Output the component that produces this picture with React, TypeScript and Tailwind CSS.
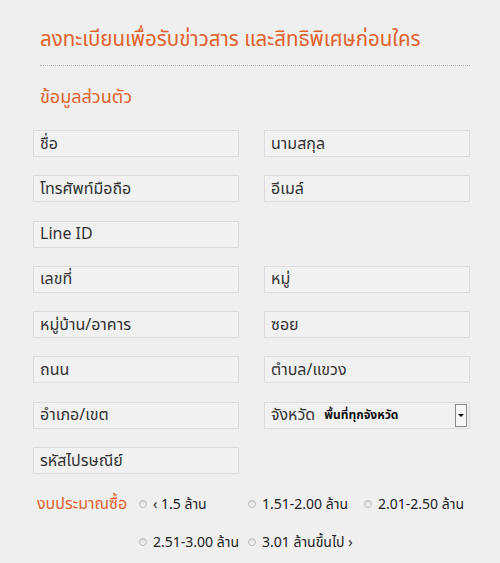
const fields: [string, string | null][] = [
  ['ชื่อ', 'นามสกุล'],
  ['โทรศัพท์มือถือ', 'อีเมล์'],
  ['Line ID', null],
  ['เลขที่', 'หมู่'],
  ['หมู่บ้าน/อาคาร', 'ซอย'],
  ['ถนน', 'ตำบล/แขวง'],
  ['อำเภอ/เขต', 'PROVINCE'],
  ['รหัสไปรษณีย์', null],
];

function Field({ label }: { label: string }) {
  return (
    <div className="h-[27px] border border-[#dcdcdc] bg-[#f1f1f1] pl-[6px] flex items-center text-[16px] text-[#333]">
      {label}
    </div>
  );
}

function Province() {
  return (
    <div className="h-[27px] border border-[#dcdcdc] bg-[#f1f1f1] pl-[6px] pr-[2px] flex items-center text-[#333]">
      <span className="text-[16px]">จังหวัด</span>
      <span className="ml-[9px] text-[12px] font-bold text-[#111]">พื้นที่ทุกจังหวัด</span>
      <span className="ml-auto w-[12px] h-[23px] border border-[#888] bg-[#f7f7f7] flex items-center justify-center">
        <span className="block w-0 h-0 border-l-[3px] border-r-[3px] border-t-[3px] border-l-transparent border-r-transparent border-t-black" />
      </span>
    </div>
  );
}

function Radio({ label, w }: { label: string; w: string }) {
  return (
    <div className={`flex items-center ${w}`}>
      <span className="w-[8px] h-[8px] rounded-full border border-[#bbb] bg-gradient-to-b from-[#ddd] to-[#f5f5f5] mr-[6px]" />
      <span className="text-[14px] text-[#222] whitespace-nowrap">{label}</span>
    </div>
  );
}

export default function App() {
  return (
    <div
      className="w-[500px] h-[563px] bg-[#efefef] overflow-hidden"
      style={{ fontFamily: '"Noto Sans Thai", "Noto Sans", "DejaVu Sans", sans-serif' }}
    >
      <div className="pl-[33px] pr-[30px]">
        <h1 className="pt-[26px] pl-[7px] text-[20.5px] leading-[28px] text-[#e0622a] font-normal">
          ลงทะเบียนเพื่อรับข่าวสาร และสิทธิพิเศษก่อนใคร
        </h1>
        <div className="mt-[11px] ml-[7px] border-t border-dotted border-[#b5b5b5]" />
        <h2 className="mt-[20px] pl-[7px] text-[18px] leading-[24px] text-[#e0622a]">ข้อมูลส่วนตัว</h2>

        <div className="mt-[20px] grid grid-cols-[206px_206px] gap-x-[25px] gap-y-[18.3px]">
          {fields.map(([l, r]) => (
            <>
              <Field key={l} label={l} />
              {r === 'PROVINCE' ? <Province key="p" /> : r ? <Field key={r} label={r} /> : <div key={l + 'x'} />}
            </>
          ))}
        </div>

        <div className="mt-[17px] flex">
          <div className="w-[106px] shrink-0 pl-[4px] text-[16px] leading-[26px] text-[#e0622a] whitespace-nowrap">งบประมาณซื้อ</div>
          <div className="flex flex-col gap-[12px]">
            <div className="flex items-center h-[26px]">
              <Radio label="‹ 1.5 ล้าน" w="w-[109px]" />
              <Radio label="1.51-2.00 ล้าน" w="w-[116px]" />
              <Radio label="2.01-2.50 ล้าน" w="" />
            </div>
            <div className="flex items-center h-[26px]">
              <Radio label="2.51-3.00 ล้าน" w="w-[109px]" />
              <Radio label="3.01 ล้านขึ้นไป ›" w="" />
            </div>
          </div>
        </div>
      </div>
    </div>
  );
}
